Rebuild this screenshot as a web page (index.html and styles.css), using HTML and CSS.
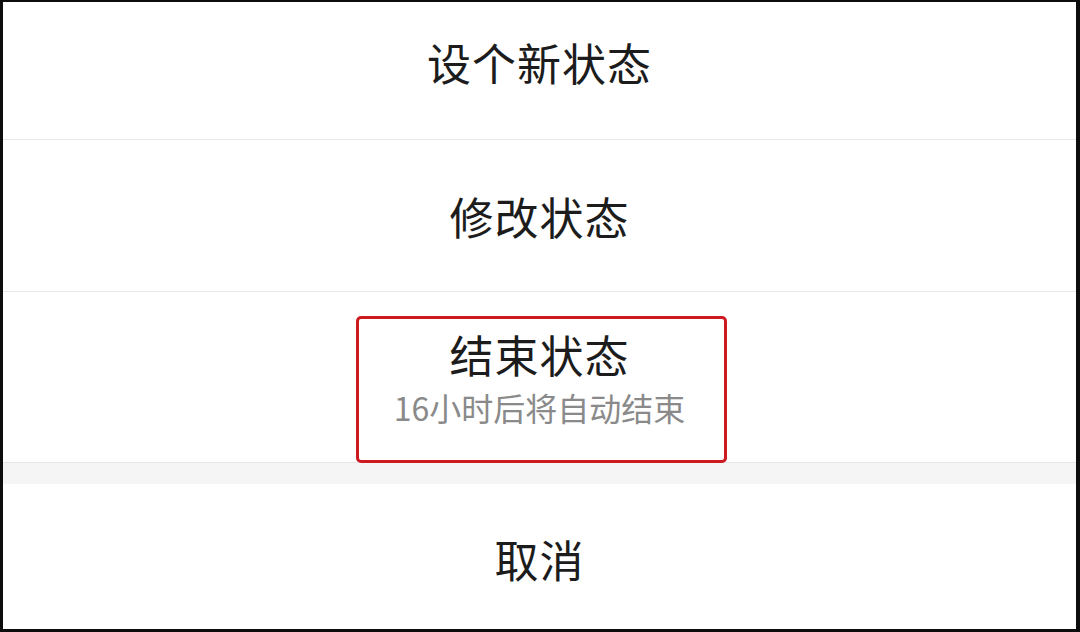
FILE: index.html
```html
<!DOCTYPE html>
<html lang="zh-CN">
<head>
<meta charset="utf-8">
<link rel="stylesheet" href="styles.css">
</head>
<body>
<div class="frame">
  <div class="sheet">
    <div class="item item-first"><span class="label">设个新状态</span></div>
    <div class="item item-second"><span class="label">修改状态</span></div>
    <div class="item item-end">
      <span class="label">结束状态</span>
      <span class="sub">16小时后将自动结束</span>
      <div class="highlight"></div>
    </div>
    <div class="spacer"></div>
    <div class="item item-cancel"><span class="label">取消</span></div>
  </div>
</div>
</body>
</html>
```

FILE: styles.css
```css
html, body {
  margin: 0;
  padding: 0;
  width: 1080px;
  height: 632px;
  overflow: hidden;
  background: #111;
}

.frame {
  box-sizing: border-box;
  width: 1080px;
  height: 632px;
  border-style: solid;
  border-color: #0d0d0d;
  border-width: 2px 4px 3px 3px;
  background: #fff;
}

.sheet {
  display: flex;
  flex-direction: column;
  height: 100%;
  font-family: "Noto Sans CJK SC", "Noto Sans", sans-serif;
  color: #1c1c1c;
}

.item {
  display: flex;
  flex-direction: column;
  align-items: center;
  justify-content: center;
  background: #fff;
  box-sizing: border-box;
}

.item-first {
  height: 138px;
  border-bottom: 1px solid #e8e8e8;
  padding-bottom: 18px;
}

.item-second {
  height: 152px;
  border-bottom: 1px solid #e8e8e8;
}

.item-end {
  position: relative;
  height: 171px;
  border-bottom: 1px solid #e6e6e6;
  padding-bottom: 2px;
}

.label {
  font-size: 44px;
  line-height: 56px;
  letter-spacing: 1px;
}

.sub {
  font-size: 32px;
  line-height: 40px;
  color: #8a8a8a;
  margin-top: 5px;
}

.highlight {
  position: absolute;
  left: 353px;
  top: 24px;
  width: 371px;
  height: 147px;
  box-sizing: border-box;
  border: 3px solid #cc1a20;
  border-radius: 5px;
}

.spacer {
  height: 21px;
  background: #f5f5f5;
}

.item-cancel {
  flex: 1;
  padding-top: 4px;
}
```
